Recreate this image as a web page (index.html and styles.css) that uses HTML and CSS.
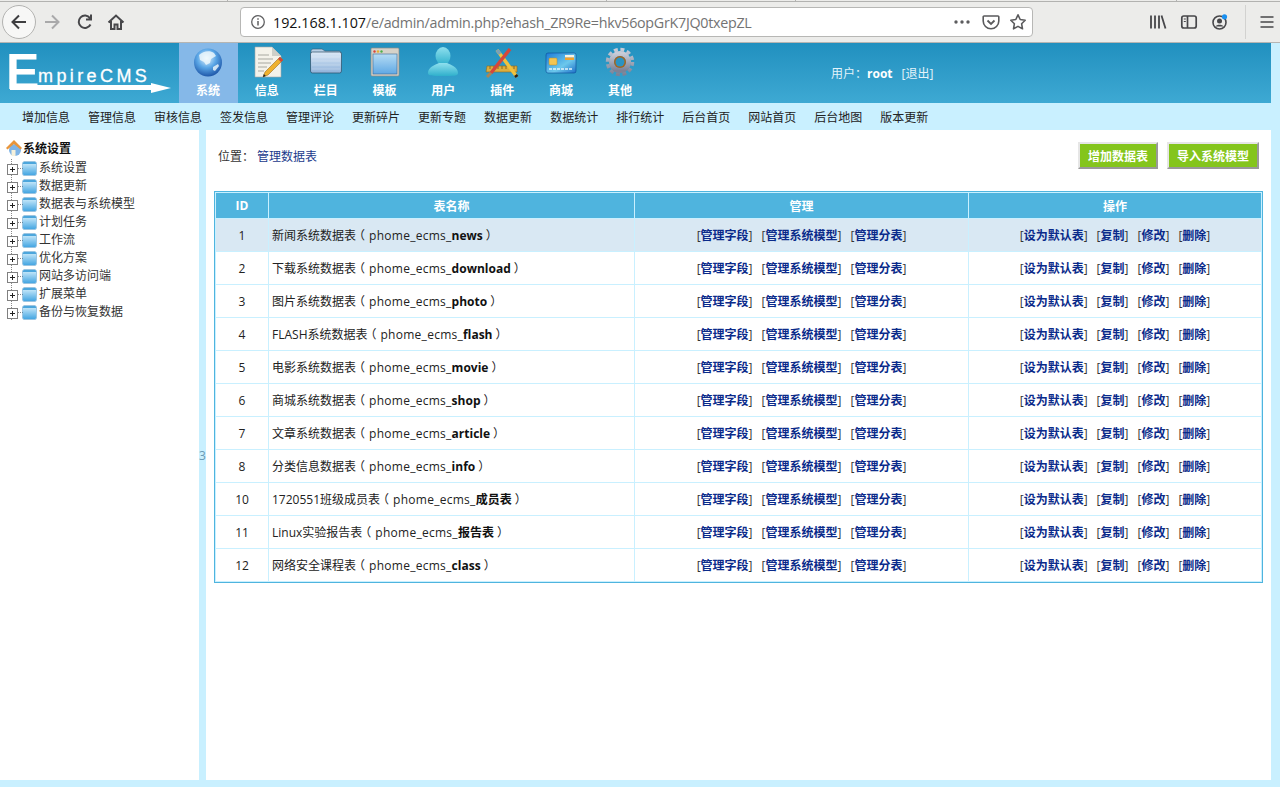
FILE: index.html
```html
<!DOCTYPE html>
<html lang="zh">
<head>
<meta charset="utf-8">
<title>EmpireCMS</title>
<link rel="stylesheet" href="styles.css">
</head>
<body>
<div class="chrome">
  <div class="tabedge"><i class="t1"></i><i class="t2"></i><i class="t3"></i><i class="t4"></i></div>
  <div class="toolbar">
    <div class="navbtns">
      <span class="back"><svg width="20" height="20" viewBox="0 0 20 20"><path d="M17 10H4M10 3.500L3.500 10l6.500 6.500" fill="none" stroke="#3e3e40" stroke-width="2"/></svg></span>
      <svg class="tb fwd" width="20" height="20" viewBox="0 0 20 20"><path d="M3 10h13M10 3.500l6.500 6.500-6.500 6.500" fill="none" stroke="#a9a9aa" stroke-width="2"/></svg>
      <svg class="tb" width="20" height="20" viewBox="0 0 20 20"><path d="M15.500 12.500A6.200 6.200 0 1 1 15 6.200M16 2.500v5h-5" fill="none" stroke="#47474a" stroke-width="2"/></svg>
      <svg class="tb home" width="20" height="20" viewBox="0 0 20 20"><path d="M2.500 10.500L10 3.500l7.500 7M5 9v8h3.500v-4.500h3V17H15V9" fill="none" stroke="#47474a" stroke-width="2"/></svg>
    </div>
    <div class="urlbar">
      <svg class="info" width="16" height="16" viewBox="0 0 16 16"><circle cx="8" cy="8" r="6.300" fill="none" stroke="#606062" stroke-width="1.300"/><path d="M8 7v4.500M8 4.300v1.500" stroke="#606062" stroke-width="1.500"/></svg>
      <span class="url"><b>192.168.1.107</b><span class="path">/e/admin/admin.php?ehash_ZR9Re=hkv56opGrK7JQ0txepZL</span></span>
      <span class="urlicons">
        <svg width="18" height="6" viewBox="0 0 18 6"><circle cx="3" cy="3" r="1.700" fill="#5c5c5e"/><circle cx="9" cy="3" r="1.700" fill="#5c5c5e"/><circle cx="15" cy="3" r="1.700" fill="#5c5c5e"/></svg>
        <svg width="18" height="18" viewBox="0 0 18 18"><path d="M2 3h14a.8.8 0 0 1 .8.8V8A7.800 7.800 0 0 1 1.200 8V3.800A.8.8 0 0 1 2 3z" fill="none" stroke="#5a5a5c" stroke-width="1.600"/><path d="M5.500 7.500L9 11l3.500-3.500" fill="none" stroke="#5a5a5c" stroke-width="1.800"/></svg>
        <svg width="18" height="18" viewBox="0 0 18 18"><path d="M9 1.800l2.200 4.700 5 .7-3.600 3.500.9 5.100L9 13.400l-4.500 2.400.9-5.100L1.800 7.200l5-.7z" fill="none" stroke="#5a5a5c" stroke-width="1.600" stroke-linejoin="round"/></svg>
      </span>
    </div>
    <div class="rightbtns">
      <svg width="18" height="18" viewBox="0 0 18 18"><path d="M2 2.500v13M6 2.500v13M10 2.500v13M12.500 2.500l4 13" stroke="#47474a" stroke-width="1.800" fill="none"/></svg>
      <svg width="18" height="18" viewBox="0 0 18 18"><rect x="1.800" y="3" width="14.400" height="12" rx="2" fill="none" stroke="#47474a" stroke-width="1.700"/><path d="M7.500 3v12" stroke="#47474a" stroke-width="1.700"/><path d="M3.800 6h2M3.800 8.500h2" stroke="#47474a" stroke-width="1.200"/></svg>
      <svg width="18" height="18" viewBox="0 0 18 18"><circle cx="8.500" cy="9.500" r="6.500" fill="none" stroke="#47474a" stroke-width="1.600"/><circle cx="8.500" cy="8" r="2.500" fill="#47474a"/><path d="M4.500 13.500c1-2.500 7-2.500 8 0" fill="#47474a"/><circle cx="13.500" cy="3.800" r="2.600" fill="#1a90f0"/></svg>
      <span class="sep"></span>
      <svg width="16" height="16" viewBox="0 0 16 16"><path d="M1.500 3h13M1.500 8h13M1.500 13h13" stroke="#47474a" stroke-width="1.700"/></svg>
    </div>
  </div>
</div>

<div class="page">
  <header class="top">
    <div class="logo">
      <span class="logo-e">E</span><span class="logo-rest">mpireCMS</span>
      <span class="logo-line"></span><span class="logo-arrow"></span>
    </div>
    <nav class="mainnav">
      <a class="mn active">
        <svg width="42" height="42" viewBox="0 0 42 42"><defs><radialGradient id="g1" cx=".45" cy=".35" r=".75"><stop offset="0" stop-color="#e6f4fc"/><stop offset=".45" stop-color="#5aa6e6"/><stop offset="1" stop-color="#0c3f96"/></radialGradient></defs><circle cx="21" cy="20.500" r="14" fill="url(#g1)"/><path d="M12 13c4-4 11-5 15-2l2 3-5 3-1 4-4 2-2-3-4-2zM26 25l5-3 1 2-4 5-2-1z" fill="#f1fafc" opacity=".8"/></svg>
        <span>系统</span>
      </a>
      <a class="mn">
        <svg width="42" height="42" viewBox="0 0 42 42"><path d="M9 5h17l9 9v21H9z" fill="#f4f2ea" stroke="#aaa" stroke-width=".6"/><path d="M26 5v9h9z" fill="#cfcfc8"/><path d="M12 13h11M12 17h15M12 21h13M12 25h9M12 29h6" stroke="#a8a8a0"/><path d="M34 15l3 3-15 15-5 2 2-5z" fill="#efb12c" stroke="#8a5c10" stroke-width=".5"/><path d="M34 15l3 3-2 2-3-3z" fill="#d0463c"/><path d="M17 35l.8-3 2 2z" fill="#222"/></svg>
        <span>信息</span>
      </a>
      <a class="mn">
        <svg width="42" height="42" viewBox="0 0 42 42"><defs><linearGradient id="g2" x1="0" y1="0" x2="0" y2="1"><stop offset="0" stop-color="#dbe9f7"/><stop offset="1" stop-color="#8fb2da"/></linearGradient></defs><path d="M6 9c0-1 1-2 2-2h9l3 2h14c1 0 2 1 2 2v5H6z" fill="#b9d0e6" stroke="#37586e" stroke-width=".6"/><rect x="5.500" y="10" width="31" height="21" rx="2" fill="url(#g2)" stroke="#2b4e66" stroke-width=".7"/><path d="M7 15h28M7 19h28M7 23h28M7 27h28" stroke="#fff" stroke-opacity=".25"/></svg>
        <span>栏目</span>
      </a>
      <a class="mn">
        <svg width="42" height="42" viewBox="0 0 42 42"><defs><linearGradient id="g3" x1="0" y1="0" x2="0" y2="1"><stop offset="0" stop-color="#b6dcf4"/><stop offset="1" stop-color="#5fa8e4"/></linearGradient></defs><rect x="7" y="6" width="28" height="28" rx="1" fill="#d6d2c8" stroke="#8a8a86" stroke-width=".7"/><circle cx="10.500" cy="9.500" r="1.200" fill="#d9453b"/><circle cx="14" cy="9.500" r="1.200" fill="#e6b030"/><circle cx="17.500" cy="9.500" r="1.200" fill="#4db04a"/><rect x="9" y="12" width="24" height="20" fill="url(#g3)" stroke="#3a6a96" stroke-width=".6"/></svg>
        <span>模板</span>
      </a>
      <a class="mn">
        <svg width="42" height="42" viewBox="0 0 42 42"><defs><linearGradient id="g4" x1="0" y1="0" x2="0" y2="1"><stop offset="0" stop-color="#8fe0ee"/><stop offset="1" stop-color="#2fb0cc"/></linearGradient></defs><ellipse cx="21" cy="14" rx="7.500" ry="9" fill="url(#g4)"/><path d="M6 31c0-6 7-8 11-10h8c4 2 11 4 11 10 0 3-4 3-15 3S6 34 6 31z" fill="url(#g4)"/></svg>
        <span>用户</span>
      </a>
      <a class="mn">
        <svg width="42" height="42" viewBox="0 0 42 42"><path d="M6 24h30v6H5z" fill="#dcae3f" stroke="#8a6a20" stroke-width=".6"/><path d="M9 24v3M13 24v3M17 24v3M21 24v3M25 24v3M29 24v3M33 24v3" stroke="#8a6a20"/><path d="M16 8l20 27" stroke="#f1c13c" stroke-width="3.500"/><path d="M16 8l3 4" stroke="#7aa1b8" stroke-width="3.500"/><path d="M34.500 33l1.500 2" stroke="#222" stroke-width="3.500"/><path d="M29 7L10 31" stroke="#d5473a" stroke-width="3.500"/><path d="M10 31l-4 4" stroke="#a88656" stroke-width="3"/></svg>
        <span>插件</span>
      </a>
      <a class="mn">
        <svg width="42" height="42" viewBox="0 0 42 42"><defs><linearGradient id="g5" x1="0" y1="0" x2="1" y2="1"><stop offset="0" stop-color="#1c7cd8"/><stop offset=".6" stop-color="#6cc8ec"/><stop offset="1" stop-color="#1d6ec8"/></linearGradient></defs><rect x="6" y="11" width="30" height="20" rx="2" fill="url(#g5)" stroke="#0c4c96" stroke-width=".6"/><rect x="9" y="16" width="8" height="7" rx="1" fill="#f3c552" stroke="#b58a24" stroke-width=".5"/><rect x="25" y="13" width="9" height="2.500" fill="#f7f2e4"/><rect x="25" y="15.500" width="9" height="2.500" fill="#f0a22e"/><path d="M9 27h24" stroke="#e4f4fb" stroke-width="1.500" stroke-dasharray="3 1"/></svg>
        <span>商城</span>
      </a>
      <a class="mn">
        <svg width="42" height="42" viewBox="0 0 42 42"><defs><linearGradient id="g6" x1="0" y1="0" x2="0" y2="1"><stop offset="0" stop-color="#c8ccd8"/><stop offset="1" stop-color="#7c8296"/></linearGradient></defs><circle cx="21" cy="20" r="12.500" fill="none" stroke="url(#g6)" stroke-width="3.500" stroke-dasharray="3.900 2.650"/><circle cx="21" cy="20" r="8.500" fill="none" stroke="url(#g6)" stroke-width="5"/><circle cx="21" cy="20" r="6" fill="#a8641c"/><circle cx="21" cy="20" r="4.500" fill="#2a93c2"/></svg>
        <span>其他</span>
      </a>
    </nav>
    <div class="userinfo">用户：<b>root</b><a class="logout">[退出]</a></div>
  </header>
  <nav class="subnav">
    <a>增加信息</a><a>管理信息</a><a>审核信息</a><a>签发信息</a><a>管理评论</a><a>更新碎片</a><a>更新专题</a><a>数据更新</a><a>数据统计</a><a>排行统计</a><a>后台首页</a><a>网站首页</a><a>后台地图</a><a>版本更新</a>
  </nav>
  <div class="body">
    <aside class="tree">
      <div class="root">
        <svg width="16" height="18" viewBox="0 0 16 18"><circle cx="9" cy="11" r="6" fill="#7fb4e6"/><path d="M0 9l8-8 8 8-1.500 1.500L8 5 1.500 10.500z" fill="#e9953a"/><rect x="5.500" y="11" width="4" height="6" fill="#f6f1dc"/></svg>
        <b>系统设置</b>
      </div>
      <ul class="nodes">
        <li>系统设置</li><li>数据更新</li><li>数据表与系统模型</li><li>计划任务</li><li>工作流</li><li>优化方案</li><li>网站多访问端</li><li>扩展菜单</li><li>备份与恢复数据</li>
      </ul>
    </aside>
    <div class="split"><span>3</span></div>
    <main class="content">
      <div class="headrow">
        <div class="crumb">位置：<a>管理数据表</a></div>
        <div class="btns"><button>增加数据表</button><button>导入系统模型</button></div>
      </div>
      <table class="grid">
        <colgroup><col class="c1"><col class="c2"><col class="c3"><col class="c4"></colgroup>
        <thead><tr><th>ID</th><th>表名称</th><th>管理</th><th>操作</th></tr></thead>
        <tbody>
          <tr class="hover"><td class="id">1</td><td>新闻系统数据表<i class="pl">（</i><span class="pre">phome_ecms_</span><b>news</b><i class="pr">）</i></td><td class="acts"><span>[<a>管理字段</a>]</span><span>[<a>管理系统模型</a>]</span><span>[<a>管理分表</a>]</span></td><td class="acts"><span>[<a>设为默认表</a>]</span><span>[<a>复制</a>]</span><span>[<a>修改</a>]</span><span>[<a>删除</a>]</span></td></tr>
          <tr><td class="id">2</td><td>下载系统数据表<i class="pl">（</i><span class="pre">phome_ecms_</span><b>download</b><i class="pr">）</i></td><td class="acts"><span>[<a>管理字段</a>]</span><span>[<a>管理系统模型</a>]</span><span>[<a>管理分表</a>]</span></td><td class="acts"><span>[<a>设为默认表</a>]</span><span>[<a>复制</a>]</span><span>[<a>修改</a>]</span><span>[<a>删除</a>]</span></td></tr>
          <tr><td class="id">3</td><td>图片系统数据表<i class="pl">（</i><span class="pre">phome_ecms_</span><b>photo</b><i class="pr">）</i></td><td class="acts"><span>[<a>管理字段</a>]</span><span>[<a>管理系统模型</a>]</span><span>[<a>管理分表</a>]</span></td><td class="acts"><span>[<a>设为默认表</a>]</span><span>[<a>复制</a>]</span><span>[<a>修改</a>]</span><span>[<a>删除</a>]</span></td></tr>
          <tr><td class="id">4</td><td>FLASH系统数据表<i class="pl">（</i><span class="pre">phome_ecms_</span><b>flash</b><i class="pr">）</i></td><td class="acts"><span>[<a>管理字段</a>]</span><span>[<a>管理系统模型</a>]</span><span>[<a>管理分表</a>]</span></td><td class="acts"><span>[<a>设为默认表</a>]</span><span>[<a>复制</a>]</span><span>[<a>修改</a>]</span><span>[<a>删除</a>]</span></td></tr>
          <tr><td class="id">5</td><td>电影系统数据表<i class="pl">（</i><span class="pre">phome_ecms_</span><b>movie</b><i class="pr">）</i></td><td class="acts"><span>[<a>管理字段</a>]</span><span>[<a>管理系统模型</a>]</span><span>[<a>管理分表</a>]</span></td><td class="acts"><span>[<a>设为默认表</a>]</span><span>[<a>复制</a>]</span><span>[<a>修改</a>]</span><span>[<a>删除</a>]</span></td></tr>
          <tr><td class="id">6</td><td>商城系统数据表<i class="pl">（</i><span class="pre">phome_ecms_</span><b>shop</b><i class="pr">）</i></td><td class="acts"><span>[<a>管理字段</a>]</span><span>[<a>管理系统模型</a>]</span><span>[<a>管理分表</a>]</span></td><td class="acts"><span>[<a>设为默认表</a>]</span><span>[<a>复制</a>]</span><span>[<a>修改</a>]</span><span>[<a>删除</a>]</span></td></tr>
          <tr><td class="id">7</td><td>文章系统数据表<i class="pl">（</i><span class="pre">phome_ecms_</span><b>article</b><i class="pr">）</i></td><td class="acts"><span>[<a>管理字段</a>]</span><span>[<a>管理系统模型</a>]</span><span>[<a>管理分表</a>]</span></td><td class="acts"><span>[<a>设为默认表</a>]</span><span>[<a>复制</a>]</span><span>[<a>修改</a>]</span><span>[<a>删除</a>]</span></td></tr>
          <tr><td class="id">8</td><td>分类信息数据表<i class="pl">（</i><span class="pre">phome_ecms_</span><b>info</b><i class="pr">）</i></td><td class="acts"><span>[<a>管理字段</a>]</span><span>[<a>管理系统模型</a>]</span><span>[<a>管理分表</a>]</span></td><td class="acts"><span>[<a>设为默认表</a>]</span><span>[<a>复制</a>]</span><span>[<a>修改</a>]</span><span>[<a>删除</a>]</span></td></tr>
          <tr><td class="id">10</td><td>1720551班级成员表<i class="pl">（</i><span class="pre">phome_ecms_</span><b>成员表</b><i class="pr">）</i></td><td class="acts"><span>[<a>管理字段</a>]</span><span>[<a>管理系统模型</a>]</span><span>[<a>管理分表</a>]</span></td><td class="acts"><span>[<a>设为默认表</a>]</span><span>[<a>复制</a>]</span><span>[<a>修改</a>]</span><span>[<a>删除</a>]</span></td></tr>
          <tr><td class="id">11</td><td>Linux实验报告表<i class="pl">（</i><span class="pre">phome_ecms_</span><b>报告表</b><i class="pr">）</i></td><td class="acts"><span>[<a>管理字段</a>]</span><span>[<a>管理系统模型</a>]</span><span>[<a>管理分表</a>]</span></td><td class="acts"><span>[<a>设为默认表</a>]</span><span>[<a>复制</a>]</span><span>[<a>修改</a>]</span><span>[<a>删除</a>]</span></td></tr>
          <tr><td class="id">12</td><td>网络安全课程表<i class="pl">（</i><span class="pre">phome_ecms_</span><b>class</b><i class="pr">）</i></td><td class="acts"><span>[<a>管理字段</a>]</span><span>[<a>管理系统模型</a>]</span><span>[<a>管理分表</a>]</span></td><td class="acts"><span>[<a>设为默认表</a>]</span><span>[<a>复制</a>]</span><span>[<a>修改</a>]</span><span>[<a>删除</a>]</span></td></tr>
        </tbody>
      </table>
    </main>
  </div>
</div>
</body>
</html>
```
FILE: styles.css
```css
* { box-sizing: border-box; }
html, body { margin: 0; padding: 0; height: 100%; overflow: hidden; }
body { width: 1280px; height: 787px; font-family: "Open Sans", "Noto Sans CJK SC", sans-serif; font-size: 12px; color: #222; background: #c9f0ff; display: flex; flex-direction: column; }

/* browser chrome */
.chrome { height: 43px; background: #ececea; border-bottom: 1px solid #b5b5b3; flex: none; position: relative; }
.tabedge { height: 2px; border-bottom: 1px solid #b2b2b0; position: relative; }
.tabedge i { position: absolute; top: 0; width: 1px; height: 2px; background: #b2b2b0; }
.t1 { left: 227px; } .t2 { left: 606px; } .t3 { left: 795px; } .t4 { left: 1176px; }
.toolbar { height: 40px; display: flex; align-items: center; }
.navbtns { display: flex; align-items: center; width: 240px; padding-left: 2px; }
.back { width: 34px; height: 34px; border-radius: 50%; border: 1px solid #b3b3b1; background: #f7f7f6; display: flex; align-items: center; justify-content: center; }
.tb { margin-left: 13px; }
.fwd { margin-left: 6px; }
.home { margin-left: 11px; }
.urlbar { width: 793px; height: 30px; background: #fff; border: 1px solid #b7b7b5; border-radius: 4px; display: flex; align-items: center; padding: 0 5px 0 9px; }
.info { flex: none; }
.url { margin-left: 7px; font-size: 14.300px; color: #737373; white-space: nowrap; }
.url b { font-weight: 400; color: #111; }
.path { letter-spacing: -0.280px; }
.urlicons { margin-left: auto; display: flex; align-items: center; gap: 9px; }
.urlicons svg:first-child { margin-right: 2px; }
.rightbtns { display: flex; align-items: center; margin-left: 116px; gap: 13px; }
.sep { width: 1px; height: 34px; background: #d2d2d0; margin: 0 0 0 3px; }

/* page */
.page { flex: 1; display: flex; flex-direction: column; min-height: 0; padding-bottom: 7px; }
.top { height: 60px; width: 1271px; flex: none; display: flex; background: linear-gradient(#2190bf, #3ea9d3); position: relative; }
.logo { width: 179px; position: relative; color: #fff; flex: none; }
.logo-e { position: absolute; left: 6px; top: -1px; font: 700 50px/60px "Liberation Sans", sans-serif; }
.logo-rest { position: absolute; left: 38px; top: 23px; font: 400 18px/20px "Liberation Sans", sans-serif; letter-spacing: 3.400px; -webkit-text-stroke: .3px #fff; }
.logo-line { position: absolute; left: 10px; top: 42px; width: 141px; height: 5px; background: #fff; }
.logo-arrow { position: absolute; left: 151px; top: 40px; border-left: 20px solid #fff; border-top: 5px solid transparent; border-bottom: 5px solid transparent; }
.mainnav { display: flex; }
.mn { width: 58.860px; height: 60px; display: flex; flex-direction: column; align-items: center; color: #fff; font-weight: 700; font-size: 12px; padding-right: 1px; }
.mn svg { display: block; margin-top: -1px; flex: none; }
.mn span { line-height: 14px; margin-top: 0; }
.mn.active { background: #85b8e8; }
.userinfo { position: absolute; left: 831px; top: 22px; color: #e3f3fa; line-height: 17px; }
.userinfo b { color: #fff; }
.logout { margin-left: 9px; }
.subnav { height: 27px; flex: none; display: flex; gap: 18px; padding-left: 22px; align-items: center; color: #222; }
.subnav a { white-space: nowrap; }
.body { flex: 1; min-height: 0; display: flex; }
.tree { width: 199px; background: #fff; padding: 9px 0 0 6px; flex: none; }
.root { display: flex; align-items: center; height: 18px; gap: 1px; color: #111; margin-bottom: 2px; }
.nodes { list-style: none; margin: 0; padding: 0; }
.nodes li {
  height: 18px; line-height: 18px; padding-left: 33px; position: relative; color: #333;
  background-image: repeating-linear-gradient(#888 0 1px, transparent 1px 2px), repeating-linear-gradient(90deg, #888 0 1px, transparent 1px 2px);
  background-size: 1px 18px, 7px 1px;
  background-position: 5px 0, 10px 9px;
  background-repeat: no-repeat;
}
.nodes li::before {
  content: ""; position: absolute; left: 1px; top: 5px; width: 9px; height: 9px; border: 1px solid #808080;
  background-color: #fff;
  background-image: linear-gradient(#222, #222), linear-gradient(#222, #222);
  background-size: 5px 1px, 1px 5px;
  background-position: center, center;
  background-repeat: no-repeat;
}
.nodes li::after { content: ""; position: absolute; left: 17px; top: 3px; width: 13px; height: 11px; border-radius: 1px; border-top: 2px solid #4ca6dc; background: linear-gradient(#bfe4f8, #45a6e2); box-shadow: 0 0 0 .5px #3a8cc4; }
.split { width: 7px; flex: none; position: relative; }
.split span { position: absolute; left: 0; top: 318px; color: #6a9ab5; line-height: 16px; }
.content { width: 1065px; background: #fff; flex: none; padding: 0 8px; }
.headrow { display: flex; justify-content: space-between; height: 61px; padding: 12px 4px 0 4px; }
.crumb { color: #333; line-height: 29px; }
.crumb a { color: #1b3a8c; margin-left: 3px; }
.btns { display: flex; gap: 9px; }
.btns button { height: 27px; padding: 0 8px; font: 700 12px "Open Sans", "Noto Sans CJK SC", sans-serif; color: #fff; background: #84c51c; border: 2px solid; border-color: #e6e6e6 #999 #999 #e6e6e6; }
.grid { width: 1049px; border: 1px solid #4fb4de; border-collapse: separate; border-spacing: 1px; background: #c9f0ff; table-layout: fixed; }
.c1 { width: 52px; } .c2 { width: 365px; } .c3 { width: 333px; } .c4 { width: 292px; }
.grid th { background: #4fb4de; color: #fff; height: 25px; padding: 0; font-weight: 700; }
.grid td { background: #fff; height: 32px; padding: 0 0 0 3px; color: #222; white-space: nowrap; }
.grid td.id { text-align: center; padding: 0; }
.grid tr.hover td { background: #d9e8f3; }
.grid td b { color: #111; }
.pl { font-style: normal; font-feature-settings: "halt"; margin: 0 4px 0 3px; }
.pr { font-style: normal; font-feature-settings: "halt"; margin-left: 3px; }
.pre { letter-spacing: .27px; }
.grid td.acts { text-align: center; padding: 0; color: #333; }
.acts span + span { margin-left: 9px; }
.acts a { color: #0a2a8a; font-weight: 700; }
```
